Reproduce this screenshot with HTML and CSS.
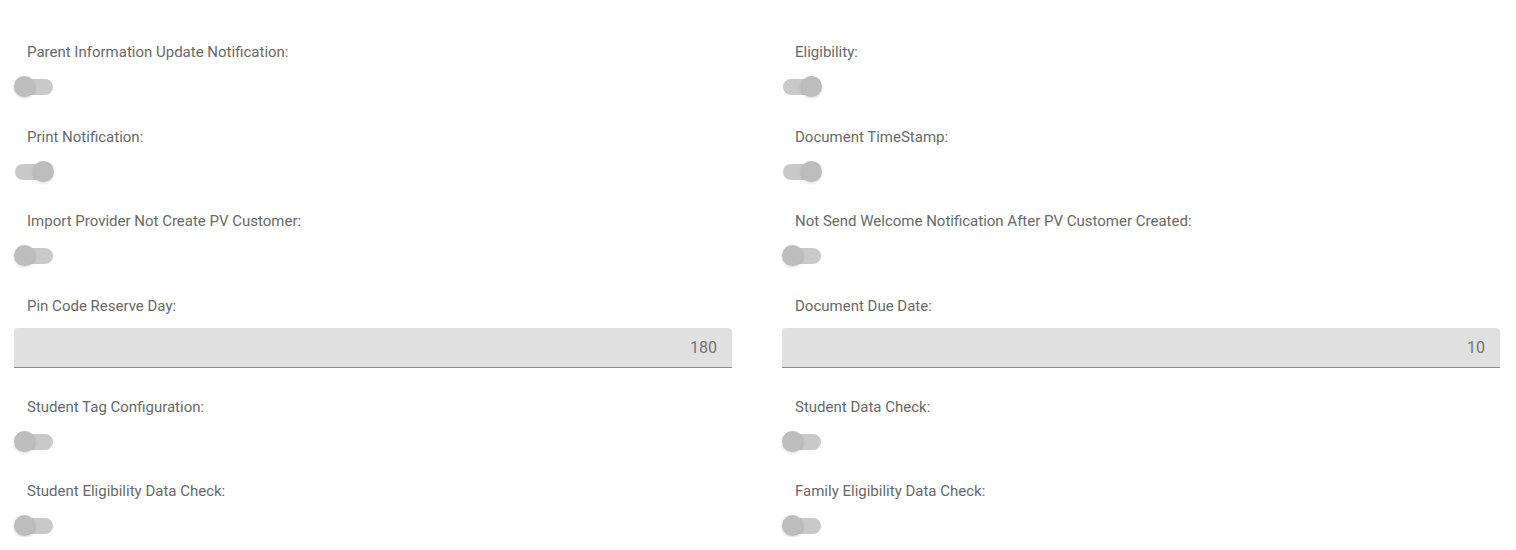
FILE: index.html
```html
<!DOCTYPE html>
<html>
<head>
<meta charset="utf-8">
<link rel="stylesheet" href="styles.css">
</head>
<body>
<div class="form">
  <div class="field">
    <div class="label">Parent Information Update Notification:</div>
    <div class="toggle"><span class="track"></span><span class="thumb"></span></div>
  </div>
  <div class="field">
    <div class="label">Eligibility:</div>
    <div class="toggle on"><span class="track"></span><span class="thumb"></span></div>
  </div>
  <div class="field">
    <div class="label">Print Notification:</div>
    <div class="toggle on"><span class="track"></span><span class="thumb"></span></div>
  </div>
  <div class="field">
    <div class="label">Document TimeStamp:</div>
    <div class="toggle on"><span class="track"></span><span class="thumb"></span></div>
  </div>
  <div class="field">
    <div class="label">Import Provider Not Create PV Customer:</div>
    <div class="toggle"><span class="track"></span><span class="thumb"></span></div>
  </div>
  <div class="field">
    <div class="label">Not Send Welcome Notification After PV Customer Created:</div>
    <div class="toggle"><span class="track"></span><span class="thumb"></span></div>
  </div>
  <div class="field input-field">
    <div class="label">Pin Code Reserve Day:</div>
    <div class="input">180</div>
  </div>
  <div class="field input-field">
    <div class="label">Document Due Date:</div>
    <div class="input">10</div>
  </div>
  <div class="field">
    <div class="label">Student Tag Configuration:</div>
    <div class="toggle"><span class="track"></span><span class="thumb"></span></div>
  </div>
  <div class="field">
    <div class="label">Student Data Check:</div>
    <div class="toggle"><span class="track"></span><span class="thumb"></span></div>
  </div>
  <div class="field">
    <div class="label">Student Eligibility Data Check:</div>
    <div class="toggle"><span class="track"></span><span class="thumb"></span></div>
  </div>
  <div class="field">
    <div class="label">Family Eligibility Data Check:</div>
    <div class="toggle"><span class="track"></span><span class="thumb"></span></div>
  </div>
</div>
</body>
</html>
```

FILE: styles.css
```css
html, body {
  margin: 0;
  padding: 0;
  background: #ffffff;
}

body {
  font-family: Roboto, "Liberation Sans", sans-serif;
}

.form {
  display: grid;
  grid-template-columns: 718px 718px;
  column-gap: 50px;
  row-gap: 27.7px;
  padding: 41px 16px 0 14px;
}

.field {
  display: flex;
  flex-direction: column;
  gap: 13px;
}

.label {
  font-size: 15px;
  line-height: 23px;
  height: 20px;
  color: #696969;
  padding-left: 13px;
}

.toggle {
  position: relative;
  width: 40px;
  height: 24px;
  margin-top: 1px;
  margin-bottom: -1px;
}

.track {
  position: absolute;
  left: 1px;
  right: 1px;
  top: 4px;
  height: 16px;
  border-radius: 8px;
  background: #c9c9c9;
}

.thumb {
  position: absolute;
  left: 0;
  top: 1px;
  width: 21px;
  height: 21px;
  border-radius: 50%;
  background: #bdbdbd;
  box-shadow: 0 1px 3px rgba(0, 0, 0, 0.18);
}

.toggle.on .thumb {
  left: auto;
  right: 0;
}

.input {
  height: 39px;
  border-bottom: 1px solid #8a8a8a;
  border-radius: 4px 4px 0 0;
  background: #e0e0e0;
  box-sizing: content-box;
  font-size: 16px;
  line-height: 40px;
  color: #757575;
  text-align: right;
  padding-right: 15px;
}
```
